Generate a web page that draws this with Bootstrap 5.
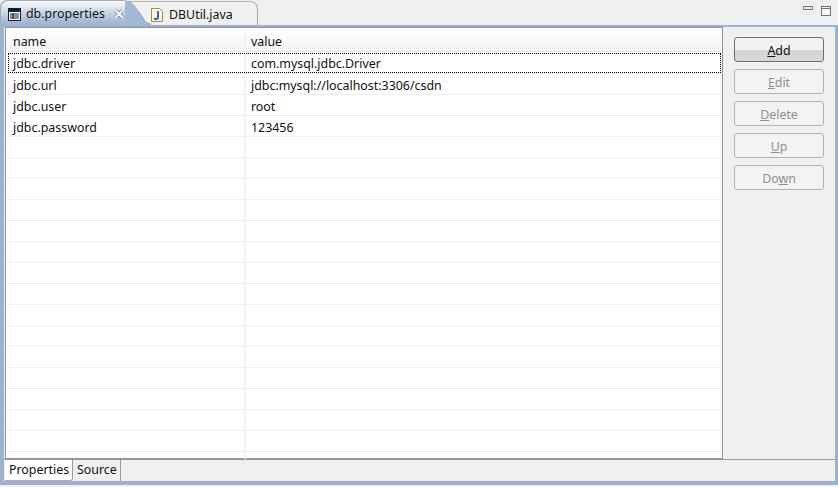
<!DOCTYPE html>
<html><head><meta charset="utf-8">
<link href="https://cdn.jsdelivr.net/npm/bootstrap@5.3.0/dist/css/bootstrap.min.css" rel="stylesheet">
<style>
html,body{height:487px;overflow:hidden}
body{background:#f0f0f0;font:12.4px/16px "Noto Sans",sans-serif;color:#111;width:838px}
.shell{height:487px}
.strip{height:25px;background:#f0f0f0}
svg{flex-shrink:0}
.tab-on{width:125px;height:25px;background:linear-gradient(#f4f6f9 8%,#a0b8d2 90%);border-top-left-radius:7px;padding-left:8px;gap:5px;box-shadow:inset 1px 1px 0 #a9a9a9;flex-shrink:0;padding-top:3px}
.tab-on .tname{color:#10141a;white-space:nowrap}
.close-x{margin-left:4px}
.curve{display:block}
.tab-off{width:107px;height:24px;gap:6px;border-top:1px solid #b4b4b4;border-right:1px solid #a8a8a8;border-top-right-radius:8px;margin-top:1px;flex-shrink:0;padding-top:2px}
.winbtns{gap:8px;padding:6px 7px 0 0;margin-left:auto}
.frame{border:solid #9cb2cc;border-width:2px 3px 4px 4px;height:460px}
.mainrow{height:432px}
.grid-box{width:718px;background:#fff;border:1px solid #8a93a1;margin-left:1px;box-shadow:inset -2px 0 0 #f4f7fb}
.thead-r{height:24px;background:linear-gradient(#fff,#f2f4f6);border-bottom:1px solid #e6ebf0;padding-top:6px}
.c1{width:240px;padding-left:7px;border-right:2px solid #eef1f5;flex-shrink:0}
.c2{padding-left:5px}
.drow{height:21px;border-bottom:1px solid #eef0f3;line-height:24px}
.drow .c1,.drow .c2{height:20px}
.focusrow{outline:1px dotted #000;outline-offset:-1px;margin:1px 1px 0 2px;height:20px;line-height:22px;border-bottom:0}
.focusrow .c1{width:238px;padding-left:5px;height:20px}
.rowspacer{height:1px;background:#eef0f3}
.rest{height:7px}
.rest .c1{height:7px}
.side{width:101px;padding:10px 0 0 11px;gap:7px}
.side .btn{width:90px;height:25px;padding:0;font-size:12.4px;line-height:25px;border-radius:3px;color:#8b9096;background:#f3f3f3;border:1px solid #b4b4b4;opacity:1}
.side .btn.go{color:#111;border-color:#707070;background:linear-gradient(#f2f2f2 50%,#d6d6d6 50%)}
.bottom{height:22px;border-top:1px solid #9a9a9a}
.sub-on{background:#fff;width:68px;height:21px;padding-left:4px;line-height:20px;border-right:1px solid #999;border-bottom:1px solid #aaa;border-bottom-right-radius:3px;margin-left:1px}
.sub-off{width:48px;height:21px;padding-left:4px;line-height:20px;border-right:1px solid #999}
.hot{text-decoration:underline}
</style></head><body>
<div class="shell d-flex flex-column">
 <div class="strip d-flex">
  <div class="tab-on d-flex align-items-center">
   <svg width="13" height="13" viewBox="0 0 13 13"><rect x=".5" y=".5" width="12" height="12" fill="#fff" stroke="#0f1f36"/><rect x="1" y="1" width="11" height="3" fill="#0f1f36"/><path d="M2 6h9M2 8h9M2 10h9M5 5v6" stroke="#0f1f36" fill="none"/></svg>
   <span class="tname">db.properties</span>
   <svg class="close-x" width="10" height="10" viewBox="0 0 10 10"><path d="M1.500 1.500l7 7M8.500 1.500l-7 7" stroke="#6a7a90" stroke-width="3.800"/><path d="M1.500 1.500l7 7M8.500 1.500l-7 7" stroke="#fbfcfd" stroke-width="2.200"/></svg>
  </div>
  <svg class="curve" width="26" height="25" viewBox="0 0 26 25"><path d="M0 1C8 1 10 8 14 12C18 17 20 24 26 24V25H0Z" fill="#a2b9d3"/><path d="M0 1C8 1 10 8 14 12C18 17 20 24 26 24" fill="none" stroke="#a9a9a9"/><path d="M4 1.500H26" stroke="#b4b4b4"/></svg>
  <div class="tab-off d-flex align-items-center">
   <svg width="12" height="14" viewBox="0 0 12 14"><path d="M.5.500h8l3 3v10H.5z" fill="#fff8e6" stroke="#a98945"/><path d="M7 3v6.500a1.800 1.800 0 0 1-3.500 .5" fill="none" stroke="#1f5aa8" stroke-width="1.800"/></svg>
   <span>DBUtil.java</span>
  </div>
  <div class="winbtns d-flex align-items-start">
   <svg width="10" height="4" viewBox="0 0 10 4"><rect x=".5" y=".5" width="9" height="3" fill="#f7f7f7" stroke="#6d7278"/></svg>
   <svg width="10" height="10" viewBox="0 0 10 10"><rect x=".5" y=".5" width="9" height="9" fill="#f7f7f7" stroke="#6d7278"/><path d="M.5 2.500h9" stroke="#6d7278"/></svg>
  </div>
 </div>
 <div class="frame d-flex flex-column">
  <div class="mainrow d-flex">
   <div class="grid-box">
    <div class="thead-r d-flex"><div class="c1">name</div><div class="c2">value</div></div>
    <div class="drow focusrow d-flex"><div class="c1">jdbc.driver</div><div class="c2">com.mysql.jdbc.Driver</div></div>
    <div class="rowspacer"></div>
    <div class="drow d-flex"><div class="c1">jdbc.url</div><div class="c2">jdbc:mysql://localhost:3306/csdn</div></div>
    <div class="drow d-flex"><div class="c1">jdbc.user</div><div class="c2">root</div></div>
    <div class="drow d-flex"><div class="c1">jdbc.password</div><div class="c2">123456</div></div>
    <div class="drow d-flex"><div class="c1"></div><div class="c2"></div></div>
    <div class="drow d-flex"><div class="c1"></div><div class="c2"></div></div>
    <div class="drow d-flex"><div class="c1"></div><div class="c2"></div></div>
    <div class="drow d-flex"><div class="c1"></div><div class="c2"></div></div>
    <div class="drow d-flex"><div class="c1"></div><div class="c2"></div></div>
    <div class="drow d-flex"><div class="c1"></div><div class="c2"></div></div>
    <div class="drow d-flex"><div class="c1"></div><div class="c2"></div></div>
    <div class="drow d-flex"><div class="c1"></div><div class="c2"></div></div>
    <div class="drow d-flex"><div class="c1"></div><div class="c2"></div></div>
    <div class="drow d-flex"><div class="c1"></div><div class="c2"></div></div>
    <div class="drow d-flex"><div class="c1"></div><div class="c2"></div></div>
    <div class="drow d-flex"><div class="c1"></div><div class="c2"></div></div>
    <div class="drow d-flex"><div class="c1"></div><div class="c2"></div></div>
    <div class="drow d-flex"><div class="c1"></div><div class="c2"></div></div>
    <div class="drow d-flex"><div class="c1"></div><div class="c2"></div></div>
    <div class="rest d-flex"><div class="c1"></div></div>
   </div>
   <div class="side d-flex flex-column">
    <button class="btn go" type="button"><span class="hot">A</span>dd</button>
    <button class="btn" type="button"><span class="hot">E</span>dit</button>
    <button class="btn" type="button"><span class="hot">D</span>elete</button>
    <button class="btn" type="button"><span class="hot">U</span>p</button>
    <button class="btn" type="button">Do<span class="hot">w</span>n</button>
   </div>
  </div>
  <div class="bottom d-flex">
   <div class="sub-on">Properties</div>
   <div class="sub-off">Source</div>
  </div>
 </div>
</div>
</body></html>
